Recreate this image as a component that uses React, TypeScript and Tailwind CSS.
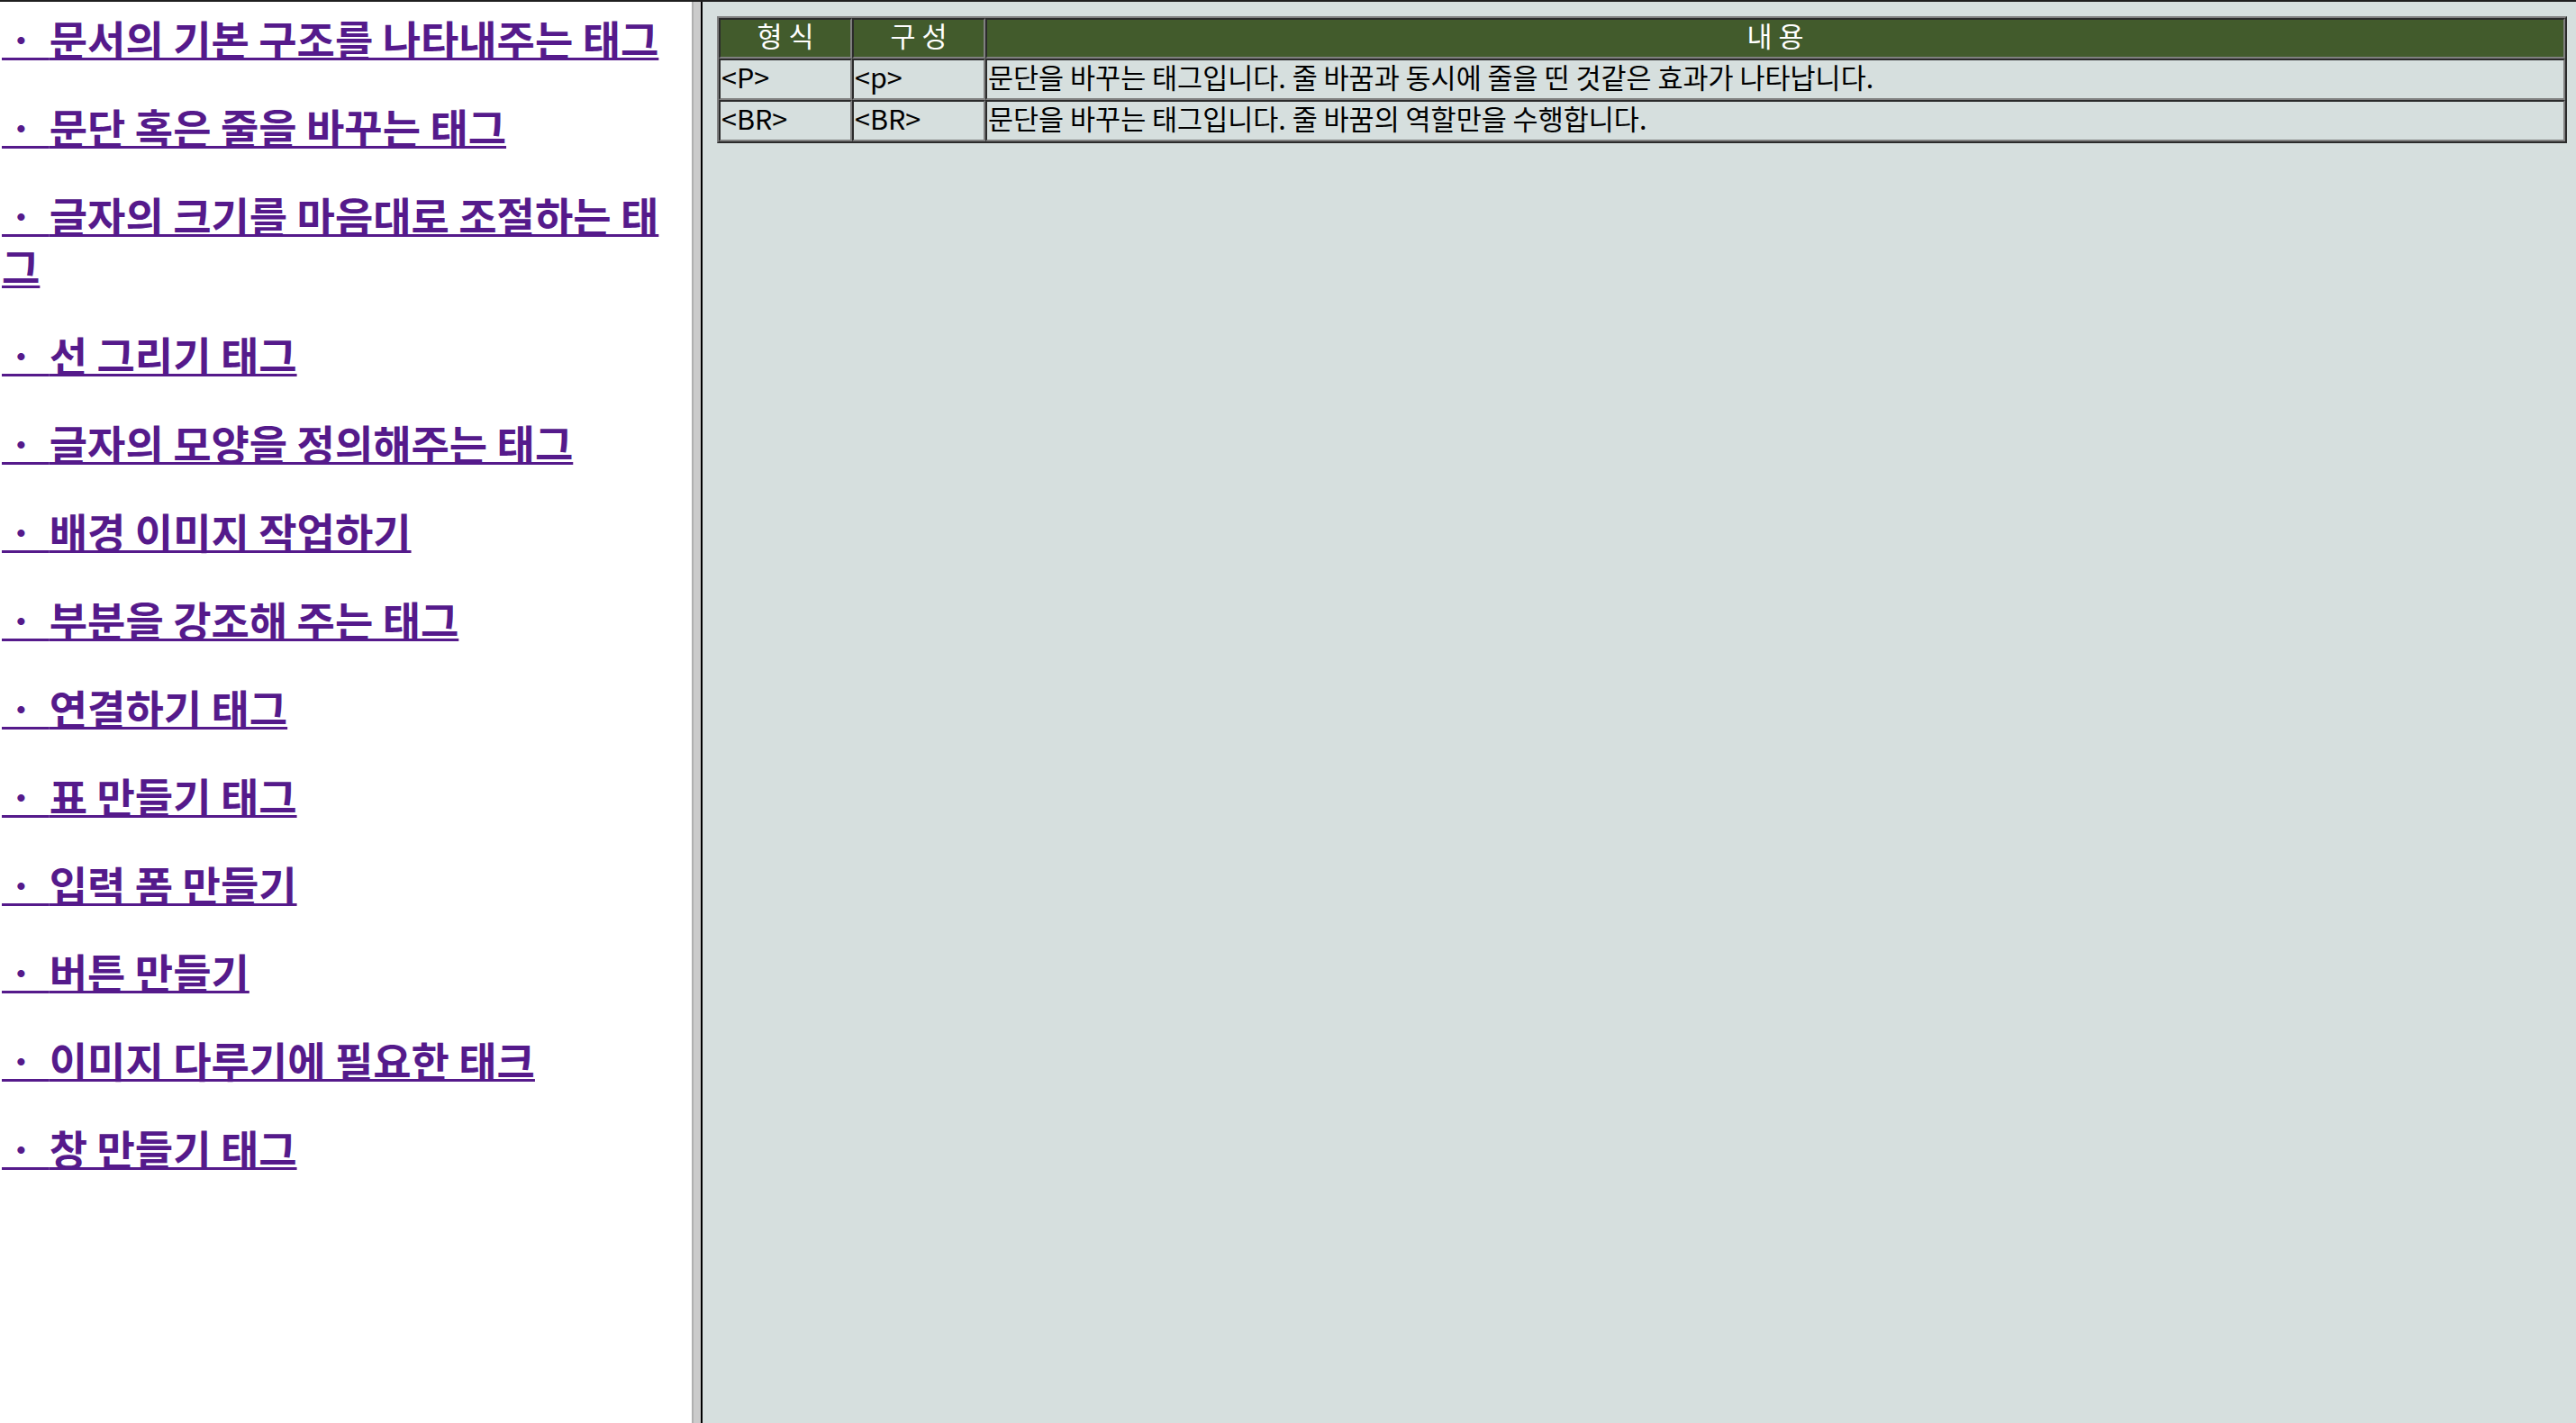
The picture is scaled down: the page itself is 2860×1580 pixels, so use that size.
import React from "react";

const links = [
  "문서의 기본 구조를 나타내주는 태그",
  "문단 혹은 줄을 바꾸는 태그",
  "글자의 크기를 마음대로 조절하는 태그",
  "선 그리기 태그",
  "글자의 모양을 정의해주는 태그",
  "배경 이미지 작업하기",
  "부분을 강조해 주는 태그",
  "연결하기 태그",
  "표 만들기 태그",
  "입력 폼 만들기",
  "버튼 만들기",
  "이미지 다루기에 필요한 태크",
  "창 만들기 태그",
];

const rows = [
  ["<P>", "<p>", "문단을 바꾸는 태그입니다. 줄 바꿈과 동시에 줄을 띤 것같은 효과가 나타납니다."],
  ["<BR>", "<BR>", "문단을 바꾸는 태그입니다. 줄 바꿈의 역할만을 수행합니다."],
];

export default function App() {
  return (
    <div className="flex h-[1580px] w-[2860px] flex-col overflow-hidden font-['Noto_Sans_CJK_KR',sans-serif]">
      <div className="h-[2px] bg-[#1f1f1f]" />
      <div className="flex min-h-0 flex-1">
        <div className="w-[768px] bg-white pl-[2px] pt-[12px]">
          <div className="flex w-[766px] flex-col gap-[40.4px]">
            {links.map((t) => (
              <p key={t} className="m-0 text-[46px] font-bold leading-[57.5px]">
                <a href="#" className="text-[#551a8b] underline decoration-[3px]">
                  ㆍ {t}
                </a>
              </p>
            ))}
          </div>
        </div>
        <div className="w-[2px] bg-[#b0b0b0]" />
        <div className="w-[8px] bg-[#cbcbcb]" />
        <div className="w-[2px] bg-black" />
        <div className="flex-1 bg-[#d6dfde] pl-[16px] pr-[10px] pt-[16px]">
          <table className="w-full border-separate border-spacing-0 border-2 border-t-[#808080] border-l-[#808080] border-b-[#2b2b2b] border-r-[#2b2b2b] text-[30.5px] leading-[30px] text-black">
            <thead>
              <tr className="bg-[#425b2c] text-white">
                <th className="w-[148px] border-2 border-t-[#2b2b2b] border-l-[#2b2b2b] border-b-[#808080] border-r-[#808080] pt-[2px] pb-[9px] text-center font-normal">형 식</th>
                <th className="w-[148px] border-2 border-t-[#2b2b2b] border-l-[#2b2b2b] border-b-[#808080] border-r-[#808080] pt-[2px] pb-[9px] text-center font-normal">구 성</th>
                <th className="border-2 border-t-[#2b2b2b] border-l-[#2b2b2b] border-b-[#808080] border-r-[#808080] pt-[2px] pb-[9px] text-center font-normal">내 용</th>
              </tr>
            </thead>
            <tbody>
              {rows.map((r, i) => (
                <tr key={i}>
                  {r.map((c, j) => (
                    <td
                      key={j}
                      className="border-2 border-t-[#2b2b2b] border-l-[#2b2b2b] border-b-[#808080] border-r-[#808080] px-[1px] pt-[3px] pb-[9px] text-left"
                    >
                      {c}
                    </td>
                  ))}
                </tr>
              ))}
            </tbody>
          </table>
        </div>
      </div>
    </div>
  );
}
